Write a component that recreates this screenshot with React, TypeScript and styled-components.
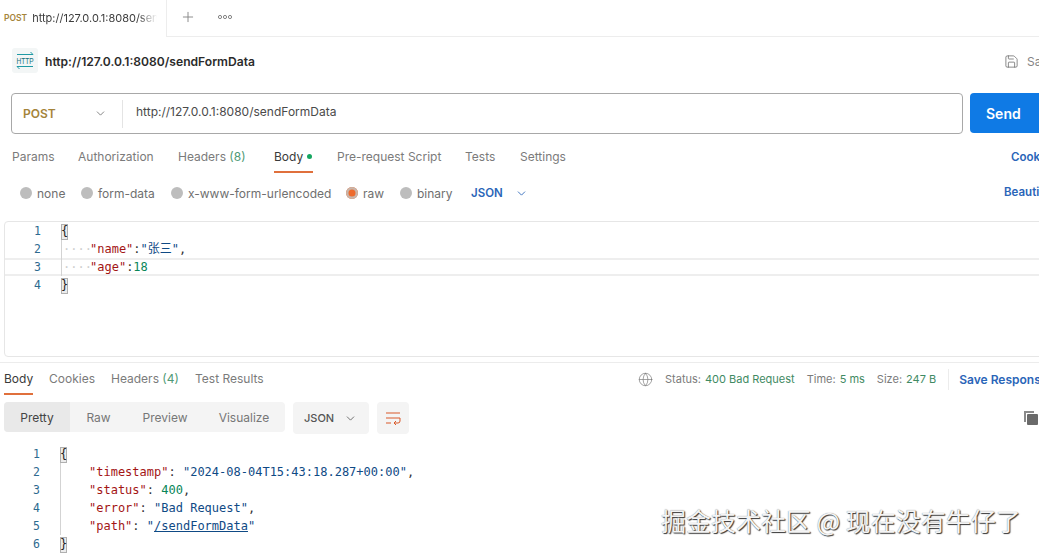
import React from "react";
import styled, { createGlobalStyle } from "styled-components";
import { ChevronDown, Plus, Globe, Save } from "lucide-react";

const Global = createGlobalStyle`
  html, body { margin: 0; padding: 0; background: #fff; height: 100%; overflow: hidden; }
  body { font-family: Inter, "Noto Sans CJK SC", sans-serif; color: #6b6b6b; }
  * { box-sizing: border-box; }
`;

const Page = styled.div`
  position: relative;
  width: 1039px;
  height: 553px;
  overflow: hidden;
  background: #fff;
`;

const TabStrip = styled.div`
  display: flex;
  height: 37px;
`;
const OpenTab = styled.div`
  width: 167px;
  flex: none;
  display: flex;
  align-items: center;
  gap: 5px;
  padding: 0 0 1px 4px;
  border-right: 1px solid #ededed;
  overflow: hidden;
`;
const TabMethod = styled.span`
  font-size: 8.5px;
  font-weight: 600;
  color: #a5843a;
`;
const TabUrl = styled.span`
  font-size: 11px;
  color: #3d3d3d;
  white-space: nowrap;
  width: 125px;
  overflow: hidden;
  -webkit-mask-image: linear-gradient(to right, #000 85%, transparent 100%);
  mask-image: linear-gradient(to right, #000 85%, transparent 100%);
`;
const TabActions = styled.div`
  flex: 1;
  display: flex;
  align-items: center;
  gap: 21px;
  padding: 0 0 3px 13px;
  border-bottom: 1px solid #ededed;
  color: #858585;
`;

const TitleRow = styled.div`
  display: flex;
  align-items: center;
  height: 25px;
  margin-top: 11px;
  padding-left: 12px;
`;
const HttpBadge = styled.div`
  width: 26px;
  height: 25px;
  flex: none;
  border-radius: 3px;
  background: #f3f6f6;
`;
const TitleText = styled.span`
  margin: 1px 0 0 7px;
  font-size: 12.1px;
  font-weight: 600;
  color: #2b2b2b;
  flex: 1;
`;
const SaveLabel = styled.span`
  display: flex;
  align-items: center;
  gap: 8px;
  width: 35px;
  margin-top: 1px;
  flex: none;
  font-size: 12px;
  color: #858585;
  overflow: hidden;
  white-space: nowrap;
  svg { color: #666; flex: none; }
`;

const RequestRow = styled.div`
  display: flex;
  gap: 7px;
  margin-top: 20px;
  padding-left: 11px;
  width: 1130px;
`;
const UrlBox = styled.div`
  width: 952px;
  height: 41px;
  flex: none;
  display: flex;
  align-items: center;
  border: 1px solid #a8a8a8;
  border-radius: 4px;
`;
const MethodPick = styled.div`
  width: 111px;
  height: 28px;
  flex: none;
  display: flex;
  align-items: center;
  justify-content: space-between;
  padding: 0 15px 0 11px;
  border-right: 1px solid #e4e4e4;
  font-size: 12px;
  font-weight: 600;
  color: #a5843a;
  svg { color: #6b6b6b; }
`;
const UrlText = styled.span`
  margin: -5px 0 0 13px;
  font-size: 12px;
  color: #4a4a4a;
`;
const SendBtn = styled.div`
  width: 100px;
  height: 40px;
  padding: 0 0 0 16px;
  display: flex;
  align-items: center;
  border-radius: 4px;
  background: #0f7ae5;
  color: #fff;
  font-size: 14px;
  font-weight: 600;
`;

const RequestTabs = styled.div`
  display: flex;
  height: 39px;
  margin-top: 3px;
  padding-left: 12px;
  position: relative;
`;
const TabItem = styled.div<{ $active?: boolean; $w: number }>`
  width: ${(p) => p.$w}px;
  flex: none;
  height: 39px;
  padding-top: 12px;
  font-size: 12px;
  line-height: 16px;
  white-space: nowrap;
  color: ${(p) => (p.$active ? "#3a3a3a" : "#7b7b7b")};
`;
const TabLabel = styled.span<{ $active?: boolean }>`
  display: block;
  width: 39px;
  height: 24px;
  border-bottom: ${(p) => (p.$active ? "2px solid #e0703c" : "none")};
`;
const Count = styled.span`
  color: #4f9a76;
`;
const GreenDot = styled.span`
  display: inline-block;
  width: 5px;
  height: 5px;
  margin-left: 4px;
  vertical-align: 2px;
  border-radius: 50%;
  background: #15a660;
`;
const SideLink = styled.span<{ $top: number; $left: number }>`
  font-size: 11.5px;
  font-weight: 600;
  color: #2a65b8;
  white-space: nowrap;
  position: absolute;
  left: ${(p) => p.$left}px;
  top: ${(p) => p.$top}px;
`;

const RadioRow = styled.div`
  display: flex;
  align-items: center;
  height: 26px;
  margin-top: 4px;
  padding-left: 20px;
  position: relative;
`;
const RadioItem = styled.div<{ $w: number }>`
  width: ${(p) => p.$w}px;
  flex: none;
  display: flex;
  align-items: center;
  gap: 5px;
  font-size: 12px;
  color: #6f6f6f;
  white-space: nowrap;
`;
const RadioDot = styled.span<{ $on?: boolean }>`
  width: 12px;
  height: 12px;
  flex: none;
  border-radius: 50%;
  background: ${(p) => (p.$on ? "#ee6a2c" : "#bdbdbd")};
  box-shadow: ${(p) => (p.$on ? "inset 0 0 0 2.5px #c9b5aa" : "none")};
`;
const JsonPick = styled.span`
  display: flex;
  align-items: center;
  gap: 12px;
  font-size: 11.5px;
  font-weight: 600;
  color: #2a65b8;
`;

const Editor = styled.div`
  width: 1060px;
  height: 136px;
  margin: 15px 0 0 4px;
  border: 1px solid #e6e6e6;
  border-radius: 4px;
`;
const CodeLine = styled.div<{ $current?: boolean }>`
  display: flex;
  height: 18px;
  line-height: 18px;
  font-family: "DejaVu Sans Mono", "Noto Sans CJK SC", monospace;
  font-size: 12px;
  white-space: pre;
  ${(p) =>
    p.$current
      ? "box-shadow: inset 0 2px 0 #eeeeee, inset 0 -2px 0 #eeeeee;"
      : ""}
`;
const LineNo = styled.span<{ $w: number }>`
  width: ${(p) => p.$w}px;
  flex: none;
  text-align: right;
  color: #2d6a8f;
  font-size: 11.5px;
`;
const CodeBody = styled.span<{ $left: number; $guide?: boolean }>`
  margin-left: ${(p) => p.$left}px;
  padding-left: 1px;
  border-left: ${(p) => (p.$guide ? "1px solid #d3d3d3" : "none")};
  color: #333;
`;
const Brace = styled.span`
  display: inline-block;
  height: 16px;
  line-height: 15px;
  margin-left: -1px;
  background: #ececec;
  color: #222;
  box-shadow: inset 0 0 0 1px #b0b0b0;
`;
const Indent = styled.span`
  display: inline-block;
  width: 27px;
  overflow: hidden;
  vertical-align: bottom;
  color: #cfcfcf;
`;
const Key = styled.span`
  color: #a31515;
`;
const Str = styled.span`
  color: #0f4a85;
`;
const Num = styled.span`
  color: #098658;
`;
const LinkStr = styled.span`
  color: #0f4a85;
  text-decoration: underline;
`;

const ResponseBar = styled.div`
  display: flex;
  height: 33px;
  margin-top: 5px;
  border-top: 1px solid #ececec;
  padding-left: 4px;
  position: relative;
`;
const ResponseTab = styled(TabItem)`
  height: 32px;
  padding-top: 8px;
`;
const ResponseLabel = styled.span<{ $active?: boolean }>`
  display: block;
  width: 29px;
  height: 24px;
  border-bottom: ${(p) => (p.$active ? "2px solid #e0703c" : "none")};
`;
const StatusArea = styled.div`
  position: absolute;
  left: 638px;
  top: 0;
  height: 32px;
  display: flex;
  align-items: center;
  width: 460px;
  font-size: 11px;
  color: #7b7b7b;
  white-space: nowrap;
  > svg { margin-right: 12px; }
`;
const Good = styled.span`
  color: #3f8a63;
  margin-left: 4px;
`;
const Stat = styled.span`
  margin-right: 12px;
`;
const SaveResp = styled.span`
  padding: 3px 0 3px 10px;
  border-left: 1px solid #ececec;
  font-size: 12px;
  font-weight: 600;
  color: #2a65b8;
`;

const ToolRow = styled.div`
  display: flex;
  align-items: flex-start;
  margin-top: 7px;
  padding-left: 4px;
  height: 30px;
  position: relative;
`;
const Segments = styled.div`
  width: 281px;
  height: 30px;
  display: flex;
  align-items: center;
  flex: none;
  border-radius: 4px;
  background: #f4f4f4;
  font-size: 12px;
  color: #777;
`;
const Segment = styled.span<{ $w: number; $active?: boolean }>`
  width: ${(p) => p.$w}px;
  height: 30px;
  flex: none;
  display: flex;
  align-items: center;
  justify-content: center;
  border-radius: 4px 0 0 4px;
  background: ${(p) => (p.$active ? "#e9e9e9" : "transparent")};
  color: ${(p) => (p.$active ? "#444" : "#777")};
`;
const FormatPick = styled.div`
  width: 76px;
  height: 32px;
  margin-left: 8px;
  flex: none;
  display: flex;
  align-items: center;
  justify-content: space-between;
  padding: 0 12px 0 11px;
  border-radius: 4px;
  background: #f4f4f4;
  font-size: 11px;
  font-weight: 500;
  color: #555;
`;
const WrapBtn = styled.div`
  width: 32px;
  height: 32px;
  margin-left: 8px;
  flex: none;
  display: flex;
  align-items: center;
  justify-content: center;
  border-radius: 4px;
  background: #f4f4f4;
`;
const CopyMark = styled.div`
  position: absolute;
  left: 1023px;
  top: 8px;
`;

const ResponseCode = styled.div`
  margin-top: 13px;
`;

const Watermark = styled.div`
  position: absolute;
  left: 661px;
  top: 504px;
  font-family: "Noto Sans CJK SC", sans-serif;
  font-size: 25px;
  line-height: 32px;
  white-space: nowrap;
  color: #f4f4f4;
  text-shadow: 1px 1px 1px #333, 0 0 1px #777;
`;

const HttpIcon = () => (
  <svg width="26" height="25" viewBox="0 0 26 25">
    <path d="M5 6.5h16M18.5 4 21 6.5M5 18.5h16M7.5 21 5 18.5" stroke="#1f9aa5" strokeWidth="1" fill="none" />
    <text x="4.5" y="16" fontFamily="Liberation Sans, sans-serif" fontSize="9" textLength="17" lengthAdjust="spacingAndGlyphs" fill="#17707c">HTTP</text>
  </svg>
);

const WrapIcon = () => (
  <svg width="16" height="16" viewBox="0 0 16 16" fill="none" stroke="#d9592a" strokeWidth="1">
    <path d="M1 3h14M1 8h14M1 13h5M15 8v3a2 2 0 0 1-2 2H9M11 11l-2 2 2 2" />
  </svg>
);

const CopyIcon = () => (
  <svg width="16" height="16" viewBox="0 0 16 16">
    <path d="M1 1h10v2H3v9H1z" fill="#8a8a8a" />
    <rect x="4" y="4" width="11" height="11" rx="1" fill="#6a6a6a" />
  </svg>
);

const MoreDots = () => (
  <svg width="16" height="6" viewBox="0 0 16 6" fill="none" stroke="#777" strokeWidth="0.9">
    <circle cx="3" cy="3" r="1.6" />
    <circle cx="8" cy="3" r="1.6" />
    <circle cx="13" cy="3" r="1.6" />
  </svg>
);

const requestTabs: [string, number][] = [
  ["Params", 66],
  ["Authorization", 100],
];

export default function App() {
  return (
    <Page>
      <Global />
      <TabStrip>
        <OpenTab>
          <TabMethod>POST</TabMethod>
          <TabUrl>http://127.0.0.1:8080/sendFormData</TabUrl>
        </OpenTab>
        <TabActions>
          <Plus size={16} strokeWidth={1.4} />
          <MoreDots />
        </TabActions>
      </TabStrip>

      <TitleRow>
        <HttpBadge>
          <HttpIcon />
        </HttpBadge>
        <TitleText>http://127.0.0.1:8080/sendFormData</TitleText>
        <SaveLabel>
          <Save size={15} strokeWidth={1.2} />
          Save
        </SaveLabel>
      </TitleRow>

      <RequestRow>
        <UrlBox>
          <MethodPick>
            POST
            <ChevronDown size={13} strokeWidth={1.5} />
          </MethodPick>
          <UrlText>http://127.0.0.1:8080/sendFormData</UrlText>
        </UrlBox>
        <SendBtn>Send</SendBtn>
      </RequestRow>

      <RequestTabs>
        {requestTabs.map(([label, w]) => (
          <TabItem key={label} $w={w}>
            {label}
          </TabItem>
        ))}
        <TabItem $w={96}>
          Headers <Count>(8)</Count>
        </TabItem>
        <TabItem $w={63} $active>
          <TabLabel $active>
            Body
            <GreenDot />
          </TabLabel>
        </TabItem>
        <TabItem $w={128}>Pre-request Script</TabItem>
        <TabItem $w={55}>Tests</TabItem>
        <TabItem $w={70}>Settings</TabItem>
        <SideLink $left={1011} $top={13}>Cookies</SideLink>
      </RequestTabs>

      <RadioRow>
        <RadioItem $w={61}>
          <RadioDot />
          none
        </RadioItem>
        <RadioItem $w={90}>
          <RadioDot />
          form-data
        </RadioItem>
        <RadioItem $w={175}>
          <RadioDot />
          x-www-form-urlencoded
        </RadioItem>
        <RadioItem $w={54}>
          <RadioDot $on />
          raw
        </RadioItem>
        <RadioItem $w={71}>
          <RadioDot />
          binary
        </RadioItem>
        <JsonPick>
          JSON
          <ChevronDown size={13} strokeWidth={1.6} />
        </JsonPick>
        <SideLink $left={1004} $top={5}>Beautify</SideLink>
      </RadioRow>

      <Editor>
        <CodeLine>
          <LineNo $w={36}>1</LineNo>
          <CodeBody $left={20}>
            <Brace>{"{"}</Brace>
          </CodeBody>
        </CodeLine>
        <CodeLine>
          <LineNo $w={36}>2</LineNo>
          <CodeBody $left={20} $guide>
            <Indent>····</Indent>
            <Key>"name"</Key>:<Str>"张三"</Str>,
          </CodeBody>
        </CodeLine>
        <CodeLine $current>
          <LineNo $w={36}>3</LineNo>
          <CodeBody $left={20} $guide>
            <Indent>····</Indent>
            <Key>"age"</Key>:<Num>18</Num>
          </CodeBody>
        </CodeLine>
        <CodeLine>
          <LineNo $w={36}>4</LineNo>
          <CodeBody $left={20}>
            <Brace>{"}"}</Brace>
          </CodeBody>
        </CodeLine>
      </Editor>

      <ResponseBar>
        <ResponseTab $w={45} $active>
          <ResponseLabel $active>Body</ResponseLabel>
        </ResponseTab>
        <ResponseTab $w={62}>Cookies</ResponseTab>
        <ResponseTab $w={84}>
          Headers <Count>(4)</Count>
        </ResponseTab>
        <ResponseTab $w={90}>Test Results</ResponseTab>
        <StatusArea>
          <Globe size={15} strokeWidth={1.1} />
          <Stat>
            Status:<Good>400 Bad Request</Good>
          </Stat>
          <Stat>
            Time:<Good>5 ms</Good>
          </Stat>
          <Stat>
            Size:<Good>247 B</Good>
          </Stat>
          <SaveResp>Save Response</SaveResp>
        </StatusArea>
      </ResponseBar>

      <ToolRow>
        <Segments>
          <Segment $w={66} $active>
            Pretty
          </Segment>
          <Segment $w={57}>Raw</Segment>
          <Segment $w={76}>Preview</Segment>
          <Segment $w={82}>Visualize</Segment>
        </Segments>
        <FormatPick>
          JSON
          <ChevronDown size={13} strokeWidth={1.5} />
        </FormatPick>
        <WrapBtn>
          <WrapIcon />
        </WrapBtn>
        <CopyMark>
          <CopyIcon />
        </CopyMark>
      </ToolRow>

      <ResponseCode>
        <CodeLine>
          <LineNo $w={40}>1</LineNo>
          <CodeBody $left={20}>
            <Brace>{"{"}</Brace>
          </CodeBody>
        </CodeLine>
        <CodeLine>
          <LineNo $w={40}>2</LineNo>
          <CodeBody $left={20} $guide>
            <Indent />
            <Key>"timestamp"</Key>: <Str>"2024-08-04T15:43:18.287+00:00"</Str>,
          </CodeBody>
        </CodeLine>
        <CodeLine>
          <LineNo $w={40}>3</LineNo>
          <CodeBody $left={20} $guide>
            <Indent />
            <Key>"status"</Key>: <Num>400</Num>,
          </CodeBody>
        </CodeLine>
        <CodeLine>
          <LineNo $w={40}>4</LineNo>
          <CodeBody $left={20} $guide>
            <Indent />
            <Key>"error"</Key>: <Str>"Bad Request"</Str>,
          </CodeBody>
        </CodeLine>
        <CodeLine>
          <LineNo $w={40}>5</LineNo>
          <CodeBody $left={20} $guide>
            <Indent />
            <Key>"path"</Key>: <Str>"</Str>
            <LinkStr>/sendFormData</LinkStr>
            <Str>"</Str>
          </CodeBody>
        </CodeLine>
        <CodeLine>
          <LineNo $w={40}>6</LineNo>
          <CodeBody $left={20}>
            <Brace>{"}"}</Brace>
          </CodeBody>
        </CodeLine>
      </ResponseCode>

      <Watermark>掘金技术社区 @ 现在没有牛仔了</Watermark>
    </Page>
  );
}
